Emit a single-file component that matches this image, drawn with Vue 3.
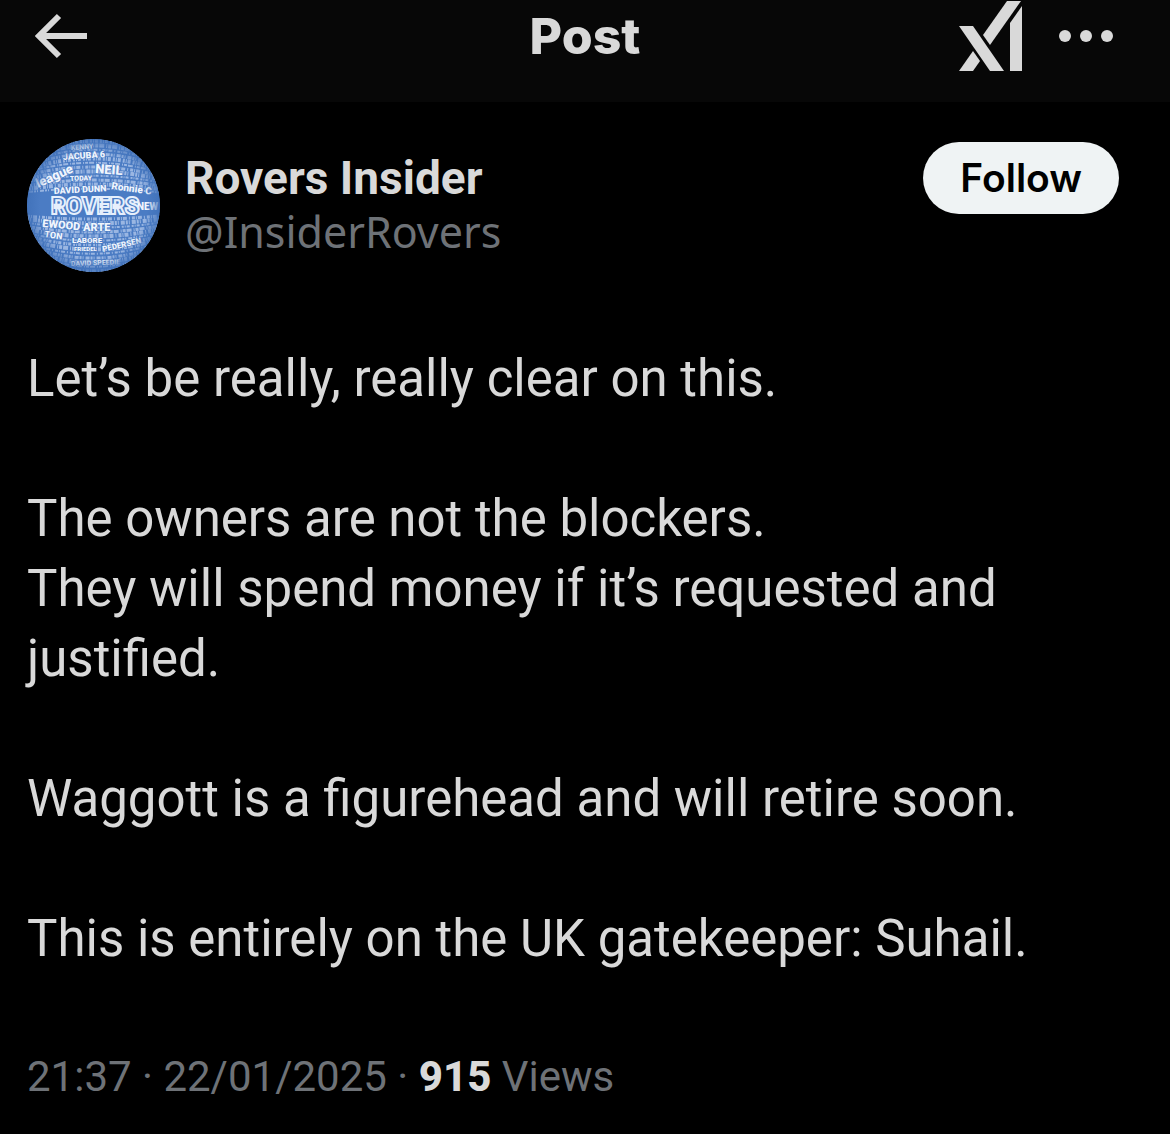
<template>
  <div class="page">
    <header class="topbar">
      <button class="icon-btn back" aria-label="Back">
        <svg width="54" height="46" viewBox="0 0 54 46">
          <path d="M25 3 5 23l20 20M5 23h48" fill="none" stroke="currentColor" stroke-width="6" />
        </svg>
      </button>
      <h1>Post</h1>
      <div class="actions">
        <button class="icon-btn" aria-label="Grok">
          <svg width="64" height="72" viewBox="0 0 64 72" fill="currentColor">
            <path d="M1 26h14l31 45H32z" />
            <path d="M1 71l14-20 7 10-7 10z" />
            <path d="M25 35 49 1h14L32 45z" />
            <path d="M52 23 64 6v65H52z" />
          </svg>
        </button>
        <button class="icon-btn" aria-label="More">
          <svg width="56" height="14" viewBox="0 0 56 14" fill="currentColor">
            <circle cx="7" cy="7" r="6" />
            <circle cx="28" cy="7" r="6" />
            <circle cx="49" cy="7" r="6" />
          </svg>
        </button>
      </div>
    </header>

    <article class="post">
      <div class="author">
        <svg class="avatar" viewBox="0 0 133 133" role="img" aria-label="Rovers Insider">
          <defs>
            <clipPath id="globe"><circle cx="66.5" cy="66.5" r="66.5" /></clipPath>
            <radialGradient id="shade">
              <stop offset="80%" stop-color="#3f70b8" stop-opacity="0" />
              <stop offset="100%" stop-color="#3f70b8" stop-opacity="0.8" />
            </radialGradient>
          </defs>
          <g clip-path="url(#globe)">
            <rect width="133" height="133" fill="#4b7cc4" />
            <path
              v-for="(band, i) in bands"
              :key="i"
              :d="band.d"
              :stroke-dasharray="band.dash"
              :stroke-width="band.width"
              class="band"
            />
            <text
              v-for="word in words"
              :key="word.text"
              :x="word.x"
              :y="word.y"
              :font-size="word.size"
              :transform="`rotate(${word.turn} ${word.x} ${word.y})`"
              class="word"
            >{{ word.text }}</text>
            <text x="24" y="75" class="rovers">ROVERS</text>
            <circle cx="66.5" cy="66.5" r="66.5" fill="url(#shade)" />
          </g>
        </svg>
        <div class="names">
          <strong class="name">Rovers Insider</strong>
          <span class="handle">@InsiderRovers</span>
        </div>
        <button class="follow">Follow</button>
      </div>

      <div class="body">
        <p v-for="(text, i) in paragraphs" :key="i">{{ text }}</p>
      </div>

      <div class="meta">21:37 · 22/01/2025 · <strong>915</strong> Views</div>
    </article>
  </div>
</template>

<script setup>
const paragraphs = [
  'Let’s be really, really clear on this.',
  'The owners are not the blockers.\nThey will spend money if it’s requested and justified.',
  'Waggott is a figurehead and will retire soon.',
  'This is entirely on the UK gatekeeper: Suhail.'
]

// readable words on the globe
const words = [
  { text: 'KENNY', x: 44, y: 11, size: 7, turn: -4 },
  { text: 'JACUBA 6', x: 36, y: 21, size: 9, turn: -4 },
  { text: 'NEIL', x: 68, y: 34, size: 13, turn: 4 },
  { text: 'league', x: 11, y: 49, size: 13, turn: -24 },
  { text: 'TODAY', x: 43, y: 42, size: 7, turn: -2 },
  { text: 'DAVID DUNN', x: 27, y: 55, size: 9, turn: -3 },
  { text: 'Ronnie C', x: 84, y: 50, size: 10, turn: 8 },
  { text: 'NEW', x: 110, y: 71, size: 10, turn: 0 },
  { text: 'EWOOD', x: 15, y: 88, size: 11, turn: 5 },
  { text: 'ARTE', x: 56, y: 92, size: 11, turn: 0 },
  { text: 'TON', x: 17, y: 98, size: 9, turn: 8 },
  { text: 'LABORE', x: 45, y: 104, size: 8, turn: 0 },
  { text: 'FRIEDEL', x: 47, y: 112, size: 6, turn: 0 },
  { text: 'PEDERSEN', x: 76, y: 113, size: 8, turn: -13 },
  { text: 'DAVID SPEEDIE', x: 44, y: 127, size: 7, turn: -2 }
]

// small print between the words, curved around the middle of the globe
const bands = Array.from({ length: 32 }, (_, i) => {
  const y = 3 + i * 4
  const bend = (y - 66) / 3
  return {
    d: `M${-(i * 7 % 5)} ${y - bend / 2}Q66 ${y + bend} 133 ${y - bend / 2}`,
    dash: ['2 1 1 2 4 1', '1 1 3 2 2 1', '5 2 1 1 3 1', '1 2 3 1 1 1 4 2'][i % 4],
    width: 2 + (i % 3)
  }
}).filter((_, i) => i < 13 || i > 18)
</script>

<style>
body {
  margin: 0;
  background: #000;
}
</style>

<style scoped>
.page {
  min-height: 100vh;
  background: #000;
  color: #d9d9d9;
  font-family: Roboto, "Liberation Sans", sans-serif;
}

.topbar {
  display: grid;
  grid-template-columns: 1fr auto 1fr;
  align-items: center;
  padding: 0 34px 30px;
  background: #070707;
}

.topbar h1 {
  margin: 0;
  font-family: Inter, sans-serif;
  font-size: 50px;
  line-height: 72px;
  font-weight: 800;
}

.icon-btn {
  display: flex;
  padding: 0;
  border: none;
  background: none;
  color: inherit;
  cursor: pointer;
}

.back {
  justify-self: start;
}

.actions {
  display: flex;
  align-items: center;
  justify-content: flex-end;
  gap: 36px;
  padding-right: 22px;
}

.post {
  padding: 37px 28px 20px 27px;
}

.author {
  display: flex;
  align-items: flex-start;
}

.avatar {
  width: 133px;
  height: 133px;
  flex-shrink: 0;
}

.band {
  fill: none;
  stroke: #cfdef6;
  stroke-opacity: 0.6;
}

.word {
  font-family: Roboto, sans-serif;
  font-weight: 900;
  fill: #f0f5fd;
  stroke: #4b7cc4;
  stroke-width: 1px;
  paint-order: stroke;
}

.rovers {
  font-family: Roboto, sans-serif;
  font-size: 23px;
  font-weight: 900;
  fill: #4b7cc4;
  stroke: #e6effc;
  stroke-width: 2px;
}

.names {
  flex: 1;
  display: flex;
  flex-direction: column;
  padding: 12px 0 0 25px;
  font-size: 46px;
  line-height: 54px;
}

.name {
  font-weight: 700;
}

.handle,
.meta {
  color: #6e7277;
}

.handle {
  font-family: "Noto Sans", sans-serif;
  font-size: 43px;
}

.follow {
  margin: 3px 23px 0 0;
  padding: 0 37px;
  border: none;
  border-radius: 36px;
  background: #eff3f4;
  color: #000;
  font-family: Inter, sans-serif;
  font-size: 39px;
  font-weight: 600;
  line-height: 72px;
  cursor: pointer;
}

.body {
  display: flex;
  flex-direction: column;
  gap: 70px;
  margin-top: 72px;
  font-size: 51px;
  line-height: 70px;
}

.body p {
  margin: 0;
  white-space: pre-line;
}

.meta {
  margin-top: 68px;
  font-size: 42px;
  line-height: 70px;
}

.meta strong {
  color: #d9d9d9;
  font-weight: 800;
}
</style>
